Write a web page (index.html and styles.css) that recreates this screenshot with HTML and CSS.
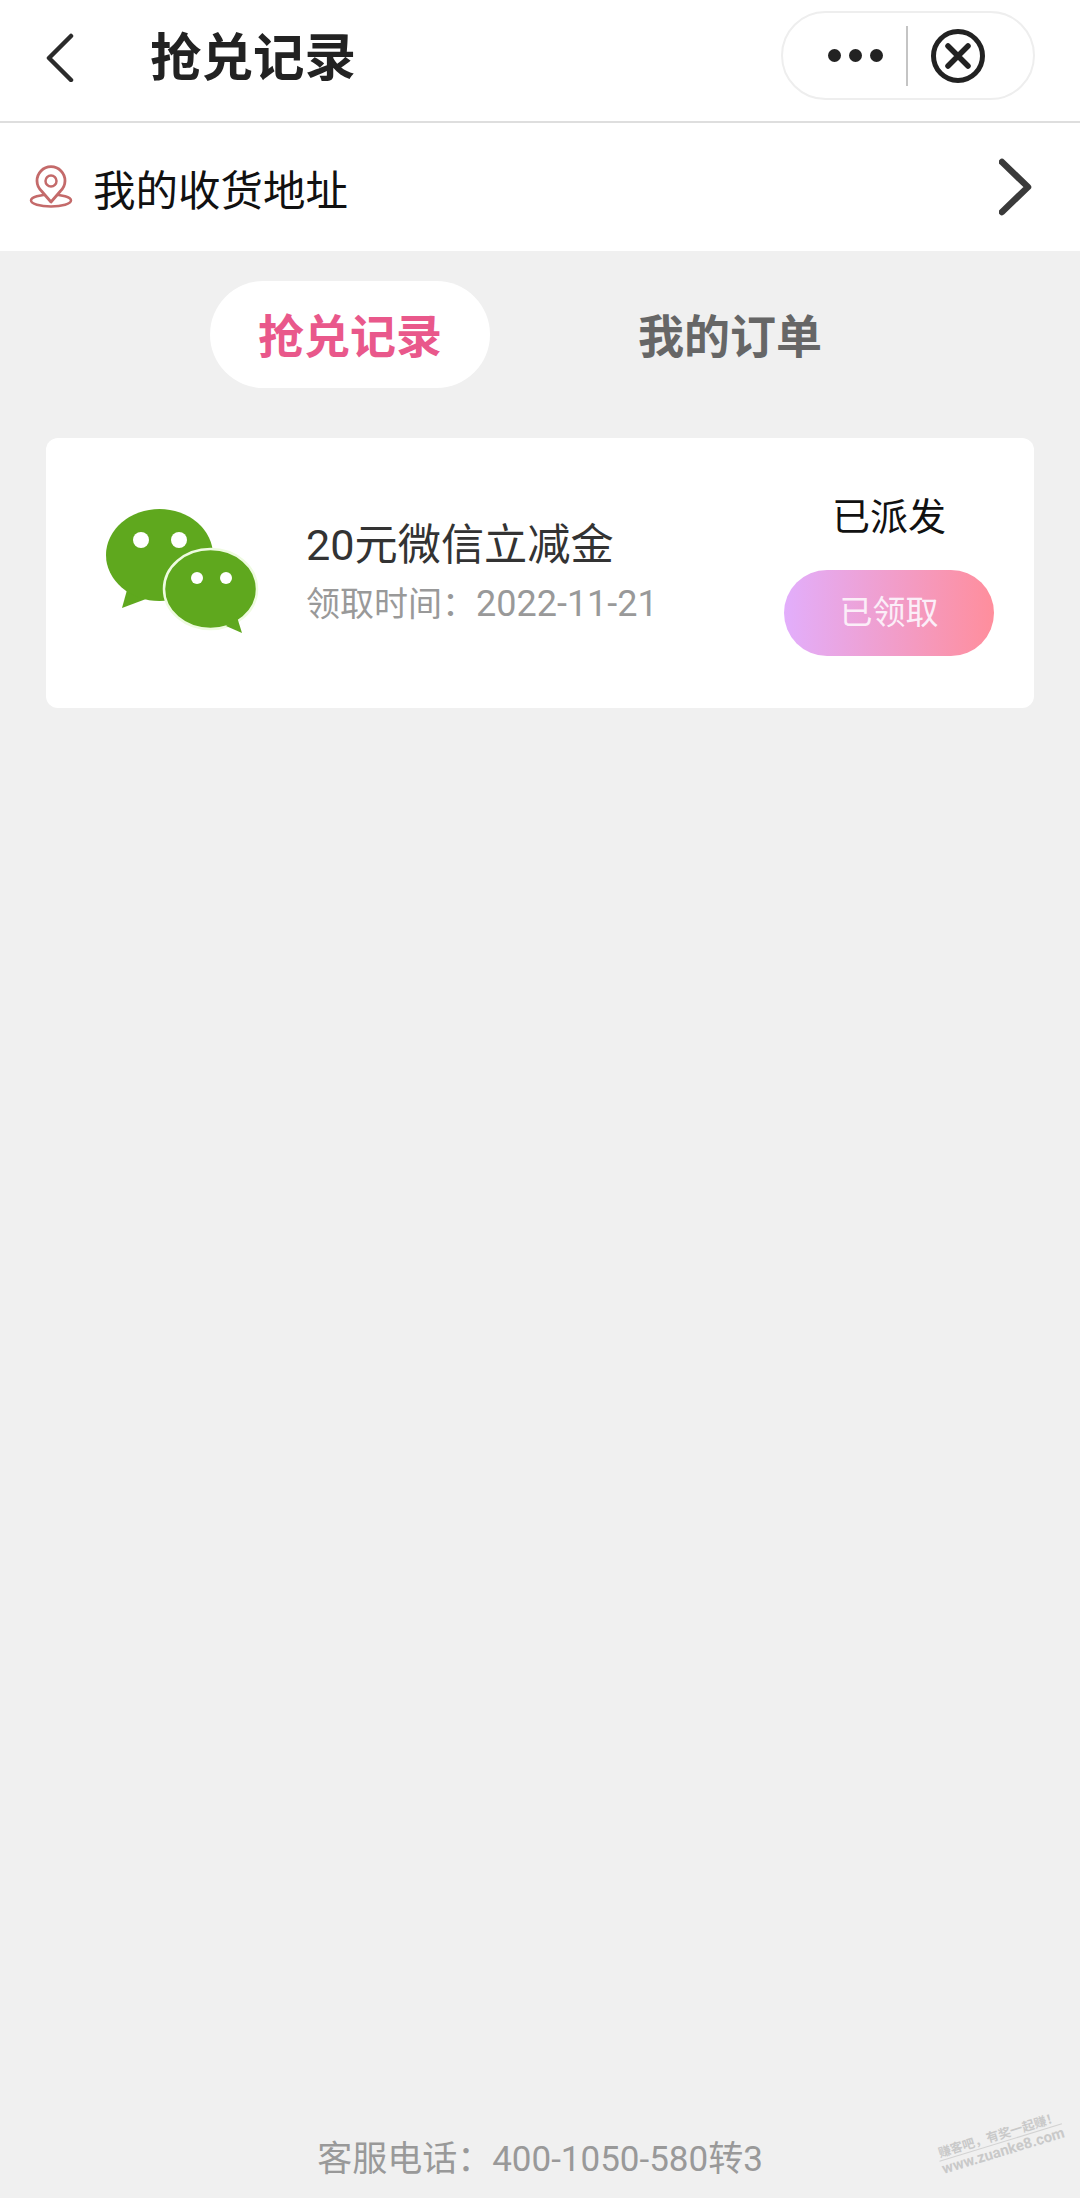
FILE: index.html
```html
<!DOCTYPE html>
<html lang="zh-CN">
<head>
    <meta charset="UTF-8">
    <meta name="viewport" content="width=device-width, initial-scale=1.0">
    <title>抢兑记录</title>
    <link rel="stylesheet" href="styles.css">
</head>
<body>

<div class="page">
    <div class="topbar">
        <svg class="back-icon" width="30" height="50" viewBox="0 0 30 50">
            <path d="M26 4 L4 26 L26 48" fill="none" stroke="#2b2b2b" stroke-width="4.500" stroke-linecap="round" stroke-linejoin="round"/>
        </svg>
        <h1 class="title">抢兑记录</h1>
        <div class="capsule">
            <div class="dots"><span></span><span></span><span></span></div>
            <div class="capsule-line"></div>
            <svg width="56" height="56" viewBox="0 0 56 56">
                <circle cx="28" cy="28" r="24.5" fill="none" stroke="#222" stroke-width="5"/>
                <path d="M18 18 L38 38 M38 18 L18 38" fill="none" stroke="#222" stroke-width="5.5" stroke-linecap="round"/>
            </svg>
        </div>
    </div>

    <div class="address">
        <svg class="pin-icon" width="44" height="44" viewBox="0 0 44 44">
            <ellipse cx="22" cy="35.5" rx="20" ry="6" fill="none" stroke="#c46a6a" stroke-width="2.5"/>
            <path d="M22 37 L12.5 26 A14 14 0 1 1 31.500 26 Z" fill="#fff" stroke="#c46a6a" stroke-width="2.800" stroke-linejoin="round"/>
            <circle cx="22" cy="16" r="5.500" fill="none" stroke="#c46a6a" stroke-width="2.500"/>
        </svg>
        <span class="address-text">我的收货地址</span>
        <svg class="arrow-icon" width="34" height="58" viewBox="0 0 34 58">
            <path d="M3 4 L29 29 L3 54" fill="none" stroke="#3a3a3a" stroke-width="6.500" stroke-linecap="round" stroke-linejoin="round"/>
        </svg>
    </div>

    <div class="tabs">
        <div class="tab active">抢兑记录</div>
        <div class="tab">我的订单</div>
    </div>

    <div class="card">
        <svg class="wechat-icon" width="160" height="140" viewBox="0 0 160 140">
            <path d="M22 107 L27 89 L46 98 Z" fill="#5fa81e"/>
            <ellipse cx="59.500" cy="54" rx="53.500" ry="46" fill="#5fa81e"/>
            <ellipse cx="110.500" cy="88" rx="46.500" ry="40" fill="#5fa81e" stroke="#eefbe0" stroke-width="2.500"/>
            <path d="M142 132 L126 125 L137 116 Z" fill="#5fa81e"/>
            <circle cx="41" cy="39" r="8" fill="#fff"/>
            <circle cx="79" cy="39" r="8" fill="#fff"/>
            <circle cx="97" cy="77" r="6" fill="#fff"/>
            <circle cx="126" cy="77" r="6" fill="#fff"/>
        </svg>
        <div class="card-info">
            <div class="card-name">20元微信立减金</div>
            <div class="card-time">领取时间：<span class="card-date">2022-11-21</span></div>
        </div>
        <div class="card-right">
            <div class="card-status">已派发</div>
            <div class="card-btn">已领取</div>
        </div>
    </div>

    <div class="footer">客服电话：400-1050-580转3</div>

    <div class="watermark">
        <div class="watermark-top">赚客吧，有奖一起赚！</div>
        <div class="watermark-bottom">www.zuanke8.com</div>
    </div>
</div>

</body>
</html>
```

FILE: styles.css
```css
* {
    box-sizing: border-box;
}

body {
    margin: 0;
    font-family: Roboto, "Noto Sans CJK SC", sans-serif;
    background-color: #f0f0f0;
}

.page {
    position: relative;
    display: flex;
    flex-direction: column;
    height: 2198px;
    overflow: hidden;
}

.topbar {
    display: flex;
    align-items: center;
    height: 123px;
    padding: 0 45px 8px 45px;
    background: #fff;
    border-bottom: 2px solid #dedede;
}

.back-icon {
    flex: none;
}

.title {
    margin: 0 0 6px 75px;
    font-size: 51.500px;
    font-weight: bold;
    color: #222;
}

.capsule {
    display: flex;
    align-items: center;
    align-self: flex-start;
    width: 254px;
    height: 89px;
    margin-left: auto;
    margin-top: 11px;
    padding-left: 45px;
    border: 2px solid #eee;
    border-radius: 45px;
}

.dots {
    display: flex;
    gap: 8px;
}

.dots span {
    width: 13px;
    height: 13px;
    border-radius: 50%;
    background: #222;
}

.capsule-line {
    width: 2px;
    height: 60px;
    margin: 0 22px 0 23px;
    background: #c4c4c4;
}

.address {
    display: flex;
    align-items: center;
    height: 128px;
    padding: 0 47px 0 29px;
    background: #fff;
}

.address-text {
    margin-left: 20px;
    font-size: 42.500px;
    color: #111;
}

.arrow-icon {
    margin-left: auto;
}

.tabs {
    display: flex;
    justify-content: center;
    gap: 100px;
    margin-top: 30px;
}

.tab {
    width: 280px;
    height: 107px;
    border-radius: 54px;
    font-size: 46px;
    font-weight: bold;
    line-height: 112px;
    text-align: center;
    color: #666;
}

.tab.active {
    background: #fff;
    color: #e9588b;
}

.card {
    display: flex;
    align-items: center;
    height: 270px;
    margin: 50px 46px 0 46px;
    padding: 0 40px 0 54px;
    background: #fff;
    border-radius: 12px;
}

.wechat-icon {
    flex: none;
    margin-top: -5px;
}

.card-info {
    margin-left: 46px;
    margin-top: -1px;
}

.card-name {
    font-size: 43.200px;
    line-height: 60px;
    color: #333;
}

.card-time {
    margin-top: 3px;
    font-size: 34px;
    line-height: 50px;
    color: #999;
}

.card-date {
    font-size: 36px;
}

.card-right {
    width: 210px;
    margin-left: auto;
    text-align: center;
}

.card-status {
    font-size: 38px;
    line-height: 52px;
    color: #111;
}

.card-btn {
    height: 86px;
    margin-top: 27px;
    border-radius: 43px;
    background: linear-gradient(90deg, #e2aefc, #ff8e9c);
    font-size: 33px;
    line-height: 86px;
    color: #fbeef8;
}

.footer {
    margin-top: auto;
    padding-bottom: 13px;
    font-size: 35px;
    line-height: 50px;
    text-align: center;
    color: #999;
}

/* forum watermark in the corner */
.watermark {
    position: absolute;
    left: 937px;
    top: 2127px;
    width: 128px;
    text-align: center;
    transform: rotate(-17deg);
    color: #c9c9c9;
}

.watermark-top {
    font-size: 12.500px;
    font-weight: bold;
    line-height: 15px;
    white-space: nowrap;
    border-bottom: 1px solid #d2d2d2;
}

.watermark-bottom {
    font-size: 15px;
    font-weight: bold;
    line-height: 17px;
    white-space: nowrap;
}
```
